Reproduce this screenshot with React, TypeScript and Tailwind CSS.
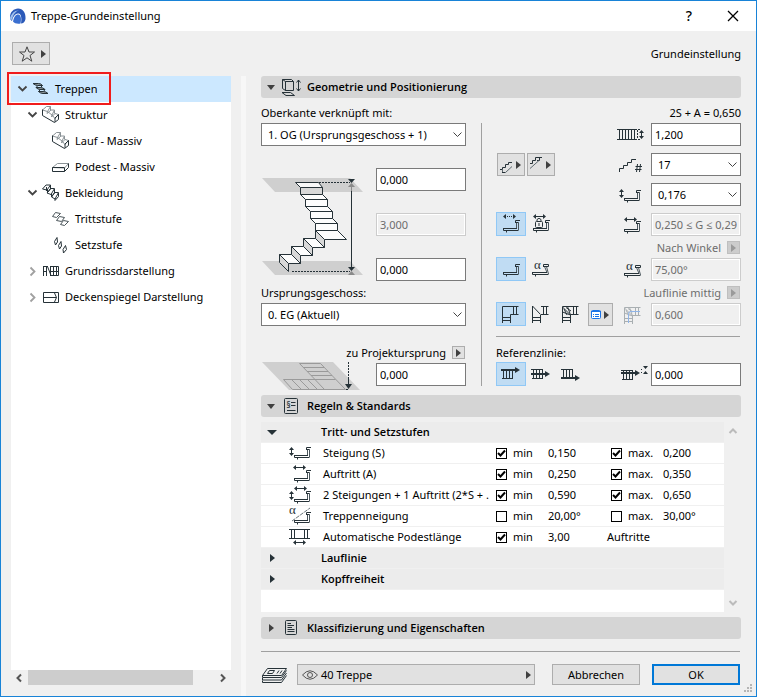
import type { ReactNode } from "react";

const INK = "#263238";

/* ---------- small shared glyphs ---------- */

function Svg({ w, h, children, className = "" }: { w: number; h: number; children: ReactNode; className?: string }) {
  return (
    <svg
      width={w}
      height={h}
      viewBox={`0 0 ${w} ${h}`}
      fill="none"
      stroke={INK}
      aria-hidden="true"
      className={`shrink-0 overflow-visible ${className}`}
    >
      {children}
    </svg>
  );
}

const TriRight = ({ color = "#404040" }: { color?: string }) => (
  <Svg w={5} h={8}>
    <path d="M0 0L5 4L0 8Z" fill={color} stroke="none" />
  </Svg>
);

const TriDown = ({ large = false }: { large?: boolean }) => (
  <Svg w={large ? 10 : 8} h={5}>
    <path d={large ? "M0 0H10L5 5Z" : "M0 0H8L4 5Z"} fill={large ? INK : "#404040"} stroke="none" />
  </Svg>
);

const ChevronDown = () => (
  <Svg w={9} h={6}>
    <path d="M.5 .5L4.5 4.5L8.5 .5" stroke="#444" strokeWidth="1.8" />
  </Svg>
);

const ChevronRight = () => (
  <Svg w={9} h={9}>
    <path d="M2.5 .5L6.5 4.5L2.5 8.5" stroke="#a0a0a0" strokeWidth="1.8" />
  </Svg>
);

/* Tread with its riser; x/y set the upper left corner. */
const Step = ({ x, y, slant = false }: { x: number; y: number; slant?: boolean }) => (
  <g transform={`translate(${x} ${y})`}>
    <path d={slant ? "M12.5 2.5L15 8.5M14.5 2.5L16.5 10" : "M13.5 2.5V8.5M15.5 2.5V10"} stroke="#4a565d" />
    <path d={slant ? "M.5 8.5H15M16.5 10.5H.5V8" : "M.5 8.5H14M15.5 10.5H.5V8"} />
    <path d={slant ? "M11.5 3V.5H16.5V2.5H12M3.5 10.5V12.5" : "M12.5 3V.5H17M12.5 2.5H15.5M3.5 10.5V12.5"} />
  </g>
);

const ArrowV = ({ x, y }: { x: number; y: number }) => (
  <g transform={`translate(${x} ${y})`}>
    <path d="M2.5 1V8" />
    <path d="M0 3L2.5 0L5 3ZM0 6L2.5 9L5 6Z" fill={INK} stroke="none" />
  </g>
);

const ArrowH = ({ x, y, dotted = false }: { x: number; y: number; dotted?: boolean }) => (
  <g transform={`translate(${x} ${y})`}>
    <path d="M2 2.5H11" strokeDasharray={dotted ? "1 1" : undefined} />
    <path d="M3 0L0 2.5L3 5ZM10 0L13 2.5L10 5Z" fill={INK} stroke="none" />
  </g>
);

const Alpha = ({ x, y }: { x: number; y: number }) => (
  <text x={x} y={y} fontSize="13" fontFamily="Liberation Serif, serif" fill={INK} stroke="none">
    α
  </text>
);

/* ---------- tree icons, 18 x 18 ---------- */

const icons: Record<string, ReactNode> = {
  stairs: (
    <Svg w={18} h={18}>
      <g fill="#8d979c">
        <path d="M1 3.5H6.5Q9 3.5 10.5 5.5H5.5Q3.5 5.5 1 3.5Z" />
        <path d="M4 7.5H8.5Q11 7.5 13 9.5H8Q6 9.5 4 7.5Z" />
        <path d="M6.5 11.5H11.5Q14 11.5 16 13.5H11Q8.5 13.5 6.5 11.5Z" />
      </g>
      <path d="M6 5.5L4 7.5M10.5 5.5L8.5 7.5M8.5 9.5L6.5 11.5M13 9.5L11.5 11.5" />
    </Svg>
  ),
  structure: (
    <Svg w={18} h={18}>
      <g stroke="#8a9296">
        <path d="M.5 4L4.5 .5H8.5L5.5 5.5ZM5.5 5.5L5 7.5L9 4H12.5L10 9ZM10 9L9.5 11L13 7.5L16.5 8.5L13 12.5ZM8.5 .5V4M12.5 4V7.5" />
      </g>
      <path d="M.5 3.5V9.5L12.5 16.5L16.5 13.5V8.5L13 12V16" />
    </Svg>
  ),
  landing: (
    <Svg w={18} h={18}>
      <path d="M.5 9.5L5.5 5.5H16.5L12.5 10Z" stroke="#8a9296" />
      <path d="M.5 9.5V13.5H12.5L16.5 9.5V5.5M12.5 10V13.5M.5 9.5H12.5" />
    </Svg>
  ),
  covering: (
    <Svg w={18} h={18}>
      <path d="M.5 5L4 1H8.5L5 6ZM5 9L8.5 4.5H12.5L9 10.5ZM9.5 13L12.5 8.5H16.5L13 15ZM4.5 3V7M8.5 1V5L5.5 8.5V5M12.5 5V9L9.5 13V10M16.5 9V12.5L13 16.5V14" />
    </Svg>
  ),
  tread: (
    <Svg w={18} h={18}>
      <path d="M.5 6.5L3.5 2.5L8.5 3.5L4.5 7.5ZM4.5 10.5L7.5 6.5L12.5 7.5L9.5 11.5ZM8.5 14.5L11.5 10.5L16.5 11.5L12.5 15.5Z" stroke="#4a555a" />
    </Svg>
  ),
  riser: (
    <Svg w={18} h={18}>
      <path d="M2.5 5.5L5 1.5L5.5 6L3.5 9ZM6.5 9.5L9 5.5L9.5 10L7.5 13ZM11 13.5L13.5 9.5L14.5 13.5L11.5 17Z" />
    </Svg>
  ),
  plan: (
    <Svg w={18} h={18}>
      <path d="M1.5 4V14M4.5 4V14M1 9.5H5M5.5 4.5L9 13.5M8.5 4V14M8 4.5H16.5V13.5H8M8 9.5H16.5M11.5 4V14M14.5 4V14M1 4.5H6" />
    </Svg>
  ),
  ceiling: (
    <Svg w={18} h={18}>
      <path d="M1.5 4.5H16.5V14.5H1.5ZM1 9.5H14.5L12.5 5M14.5 9.5L12.5 14" />
    </Svg>
  ),
};

/* ---------- tree ---------- */

type Node = { label: string; icon: string; pad: string; open?: boolean; selected?: boolean };

const tree: Node[] = [
  { label: "Treppen", icon: "stairs", pad: "pl-[7px]", open: true, selected: true },
  { label: "Struktur", icon: "structure", pad: "pl-[17px]", open: true },
  { label: "Lauf - Massiv", icon: "structure", pad: "pl-[27px]" },
  { label: "Podest - Massiv", icon: "landing", pad: "pl-[27px]" },
  { label: "Bekleidung", icon: "covering", pad: "pl-[17px]", open: true },
  { label: "Trittstufe", icon: "tread", pad: "pl-[27px]" },
  { label: "Setzstufe", icon: "riser", pad: "pl-[27px]" },
  { label: "Grundrissdarstellung", icon: "plan", pad: "pl-[17px]", open: false },
  { label: "Deckenspiegel Darstellung", icon: "ceiling", pad: "pl-[17px]", open: false },
];

function Sidebar() {
  return (
    <aside className="relative flex w-[220px] shrink-0 flex-col pb-[11px]">
      <ul className="flex-1 bg-white">
        {tree.map((n) => (
          <li key={n.label} className={`flex h-[26px] items-center gap-[5px] ${n.pad} ${n.selected ? "bg-[#cce8ff]" : ""}`}>
            {n.open === undefined ? (
              <span className="w-[9px]" />
            ) : (
              <button type="button" aria-label={n.label} aria-expanded={n.open} className="w-[9px]">
                {n.open ? <ChevronDown /> : <ChevronRight />}
              </button>
            )}
            {icons[n.icon]}
            <span className="whitespace-nowrap">{n.label}</span>
          </li>
        ))}
      </ul>
      <div className="pointer-events-none absolute -top-1 -left-1 h-[33px] w-[104px] border-2 border-[#f01c1c]" />
      <div className="flex h-[15px] items-center gap-[6px] px-[5px]">
        <button type="button" aria-label="Nach links">
          <Svg w={6} h={8}>
            <path d="M5 .5L1.5 4L5 7.5" stroke="#555" strokeWidth="2" />
          </Svg>
        </button>
        <div className="flex h-full flex-1">
          <div className="h-full w-[165px] bg-[#cdcdcd]" />
        </div>
        <button type="button" aria-label="Nach rechts">
          <Svg w={6} h={8}>
            <path d="M1 .5L4.5 4L1 7.5" stroke="#555" strokeWidth="2" />
          </Svg>
        </button>
      </div>
    </aside>
  );
}

/* ---------- controls ---------- */

function Field({ label, value, disabled = false }: { label: string; value: string; disabled?: boolean }) {
  return (
    <input
      aria-label={label}
      defaultValue={value}
      disabled={disabled}
      className={`h-[23px] w-[90px] border px-[3px] ${
        disabled ? "border-[#ccc] bg-[#f0f0f0] text-[#6d6d6d] shadow-[inset_0_0_0_1px_#fff]" : "border-[#7a7a7a] bg-white"
      }`}
    />
  );
}

function Picker({ label, value, wide = false }: { label: string; value: string; wide?: boolean }) {
  return (
    <div className={`relative ${wide ? "w-full" : "w-[90px]"}`}>
      <select
        aria-label={label}
        defaultValue={value}
        className="block h-[23px] w-full appearance-none border border-[#7a7a7a] bg-white pt-px pr-5 pl-[6px]"
      >
        <option>{value}</option>
      </select>
      <span className="pointer-events-none absolute inset-y-0 right-1 flex items-center">
        <Svg w={9} h={6}>
          <path d="M.5 .5L4.5 4.5L8.5 .5" stroke="#444" />
        </Svg>
      </span>
    </div>
  );
}

function MiniButton({ label, disabled = false }: { label: string; disabled?: boolean }) {
  return (
    <button
      type="button"
      aria-label={label}
      disabled={disabled}
      className={`mr-px flex size-[13px] items-center justify-center border ${
        disabled ? "border-[#bfbfbf] bg-[#ccc]" : "border-[#adadad] bg-[#e1e1e1]"
      }`}
    >
      <TriRight color={disabled ? "#9a9a9a" : "#404040"} />
    </button>
  );
}

function Toggle({ label, on = false, children }: { label: string; on?: boolean; children: ReactNode }) {
  return (
    <button
      type="button"
      aria-label={label}
      aria-pressed={on}
      className={`flex h-6 w-[30px] items-center justify-center border ${on ? "border-[#90c8f6] bg-[#c0dcf3]" : "border-transparent"}`}
    >
      <Svg w={24} h={20}>{children}</Svg>
    </button>
  );
}

function MenuButton({ label, children }: { label: string; children: ReactNode }) {
  return (
    <button
      type="button"
      aria-label={label}
      className="flex h-[23px] w-7 items-center justify-between border border-[#adadad] bg-[#e1e1e1] pr-[3px] pl-px"
    >
      {children}
      <TriRight />
    </button>
  );
}

/* One line of the right-hand block: switches, then a pictogram and its field. */
function Line({ left, icon, field }: { left?: ReactNode; icon: ReactNode; field: ReactNode }) {
  return (
    <div className="flex h-[23px] items-end">
      {left}
      <div className="ml-auto flex h-full items-center gap-[5px]">
        <Svg w={30} h={20}>{icon}</Svg>
        {field}
      </div>
    </div>
  );
}

function SectionHeader({ title, icon, open }: { title: string; icon: ReactNode; open: boolean }) {
  return (
    <h2 className="font-['Open_Sans','Noto_Sans',sans-serif] font-semibold">
      <button
        type="button"
        aria-expanded={open}
        className="flex h-[22px] w-full items-center gap-[6px] rounded-[3px] bg-[#d5d5d5] pl-[6px]"
      >
        <span className="flex w-2 justify-center">{open ? <TriDown /> : <TriRight />}</span>
        {icon}
        <span>{title}</span>
      </button>
    </h2>
  );
}

/* ---------- drawings ---------- */

const StairDrawing = () => (
  <svg width="102" height="98" viewBox="261 178 102 98" fill="none" stroke={INK} aria-hidden="true" className="mt-8 shrink-0">
    <path d="M262 178H350L363 192H275ZM262 261H350L363 275H275Z" fill="#cfcfcf" stroke="none" />
    <g fill="#fff" fillOpacity=".85">
      <path d="M295.5 182.5H318.5L322.5 187.5H300.5Z" />
      <path d="M300.5 194.5H322.5L327.5 199.5H305.5Z" />
      <path d="M305.5 199.5H327.5V206.5H305.5Z" />
      <path d="M305.5 206.5H327.5L332.5 211.5H310.5Z" />
      <path d="M310.5 211.5H332.5V218.5H310.5Z" />
      <path d="M310.5 218.5H332.5L337.5 223.5H315.5Z" />
      <path d="M315.5 223.5H337.5V230.5H315.5Z" />
      <path d="M315.5 230.5H337.5L346.5 239.5H324.5Z" />
      <path d="M303.5 238.5H315.5L324.5 247.5H312.5Z" />
      <path d="M291.5 246.5H303.5L312.5 255.5H300.5Z" />
      <path d="M279.5 254.5H291.5L300.5 263.5H288.5Z" />
    </g>
    <g fill="#d8d8d8">
      <path d="M300.5 187.5H322.5V194.5H300.5Z" />
      <path d="M315.5 230.5L324.5 239.5V247.5L315.5 238.5Z" />
      <path d="M303.5 238.5L312.5 247.5V255.5L303.5 246.5Z" />
      <path d="M291.5 246.5L300.5 255.5V263.5L291.5 254.5Z" />
      <path d="M279.5 254.5L288.5 263.5V271.5L279.5 262.5Z" />
    </g>
    <path d="M319 182.5H350M292 271.5H350" strokeDasharray="2 1" />
    <path d="M351.5 191V270" />
    <path d="M351.5 185V191" stroke="#8a8a8a" />
    <path d="M348 179H355L351.5 183ZM348 267H355L351.5 271Z" fill={INK} stroke="none" />
    <path d="M348 187H355L351.5 183ZM348 275H355L351.5 271Z" fill="#8a8a8a" stroke="none" />
  </svg>
);

const OriginDrawing = () => (
  <svg width="102" height="29" viewBox="261 363 102 29" fill="none" aria-hidden="true" className="shrink-0 overflow-visible">
    <path d="M262 362H333L360 390H289Z" fill="#cfcfcf" />
    <path
      d="M299.5 363.5H320.5L345.5 389.5H292.5L283.5 379.5H335.5M299.5 363.5L315 379.5M303 367.5H324M307 371.5H328M311 375.5H332M291.5 379.5L301 389M299.5 379.5L309 389M307.5 379.5L317 389M315 379.5L324 389"
      stroke="#9a9a9a"
    />
    <path d="M348.5 362V378" stroke={INK} strokeDasharray="2 1" />
    <path d="M348.5 378V386M346 389.5H348" stroke={INK} />
    <path d="M345 384H352L348.5 389Z" fill={INK} />
  </svg>
);

const Winder = ({ x, y, kind, color = INK }: { x: number; y: number; kind: "plain" | "diagonal" | "fan"; color?: string }) => (
  <g transform={`translate(${x} ${y})`} stroke={color}>
    <path d="M9 .5H16.5M9 8.5H16.5M11.5 0V9M14.5 0V9M.5 9V17M8.5 9V17M0 11.5H9M0 14.5H9" />
    {kind === "plain" && <path d="M.5 11V.5H10M8.5 12V8.5H12" />}
    {kind === "diagonal" && <path d="M.5 10V0L8.5 8.5" />}
    {kind === "fan" && <path d="M.5 10V.5H10M8.5 9L.5 1M8.5 9L5.5 .5M8.5 9L.5 6M2 3L5 9M4 1.5L9 5" />}
  </g>
);

/* A flight seen from above, with the reference line at one edge or in the middle. */
const Flight = ({ x, y, line }: { x: number; y: number; line: number }) => (
  <g transform={`translate(${x} ${y})`}>
    <path d="M2.5 1V11M5.5 1V11M8.5 1V11M11.5 1V11" />
    {line > 2 && <path d="M0 1.5H12" />}
    {line < 10 && <path d="M1 10.5H12" />}
    <path d={`M0 ${line}H15`} strokeWidth="2" />
    <path d={`M14 ${line - 3}L19 ${line}L14 ${line + 3}Z`} fill={INK} stroke="none" />
  </g>
);

/* ---------- geometry section ---------- */

function Geometry() {
  return (
    <div className="mb-[9px] flex">
      <div className="w-[205px] shrink-0">
        <div className="flex h-[25px] items-center pt-1">Oberkante verknüpft mit:</div>
        <Picker label="Oberkante verknüpft mit" value="1. OG (Ursprungsgeschoss + 1)" wide />
        <div className="flex justify-between">
          <StairDrawing />
          <div className="flex flex-col gap-[22px] pt-[22px]">
            <Field label="Oberer Versatz" value="0,000" />
            <Field label="Treppenhöhe" value="3,000" disabled />
            <Field label="Unterer Versatz" value="0,000" />
          </div>
        </div>
        <div className="flex h-[22px] items-center pt-[2px]">Ursprungsgeschoss:</div>
        <Picker label="Ursprungsgeschoss" value="0. EG (Aktuell)" wide />
        <div className="mt-[18px] mb-[2px] flex h-[17px] items-center justify-end gap-[6px]">
          <span>zu Projektursprung</span>
          <MiniButton label="zu Projektursprung" />
        </div>
        <div className="flex justify-between">
          <div className="h-[23px]">
            <OriginDrawing />
          </div>
          <Field label="Höhe zu Projektursprung" value="0,000" />
        </div>
      </div>

      <div className="mt-[25px] mr-[14px] ml-[15px] w-px bg-[#a0a0a0]" />

      <div className="min-w-0 flex-1">
        <div className="flex h-[25px] items-center justify-end pt-1">2S + A = 0,650</div>
        <div className="flex flex-col gap-[7px]">
          <Line
            icon={
              <>
                <path d="M1 4.5H19M1 14.5H19M3.5 4V15M6.5 4V15M9.5 4V15M12.5 4V15M15.5 4V15M18.5 4V15" />
                <path d="M19 4.5H24M19 14.5H24M21.5 5V14" strokeDasharray="2 1" />
                <ArrowV x={23} y={5} />
              </>
            }
            field={<Field label="Treppenbreite" value="1,200" />}
          />
          <Line
            left={
              <div className="flex gap-0.5 pl-px">
                <MenuButton label="Treppenanfang">
                  <Svg w={14} h={20}>
                    <path d="M1 14.5H3.5V12.5H6.5V9.5H9.5V7.5H13M3 17.5H6.5" />
                    <path d="M3.5 14V17M6.5 17.5L13 11.5" stroke="#5c686e" />
                  </Svg>
                </MenuButton>
                <MenuButton label="Treppenende">
                  <Svg w={14} h={20}>
                    <path d="M1 8.5H3.5V5.5H6.5V2.5H13M10.5 2.5V5.5H8" />
                    <path d="M1 13.5L10 5.5" stroke="#5c686e" />
                  </Svg>
                </MenuButton>
              </div>
            }
            icon={
              <>
                <path d="M3.5 17V13.5H7.5V10.5H11.5V7.5H15.5V4.5H20" />
                <path d="M21.5 9L20.5 17M24.5 9L23.5 17M19.5 11.5H26M19 14.5H25.5" />
              </>
            }
            field={<Picker label="Anzahl der Steigungen" value="17" />}
          />
          <Line
            icon={
              <>
                <ArrowV x={3} y={4} />
                <Step x={8} y={5} />
              </>
            }
            field={<Picker label="Steigung" value="0,176" />}
          />
          <Line
            left={
              <div className="flex">
                <Toggle label="Auftritt frei" on>
                  <ArrowH x={4} y={0} dotted />
                  <Step x={4} y={6} />
                </Toggle>
                <Toggle label="Auftritt gesperrt">
                  <ArrowH x={4} y={0} />
                  <Step x={4} y={6} />
                  <rect x="6.5" y="7.5" width="7" height="6" rx="1" fill="#f0f0f0" />
                  <path d="M8 7V5.5Q10 3 12 5.5V7M10 9V12" />
                </Toggle>
              </div>
            }
            icon={
              <>
                <ArrowH x={8} y={2} />
                <Step x={8} y={6} />
              </>
            }
            field={<Field label="Auftritt" value="0,250 ≤ G ≤ 0,29" disabled />}
          />
        </div>
        <div className="flex h-[22px] items-center justify-end gap-[6px] pt-px text-[#6d6d6d]">
          <span>Nach Winkel</span>
          <MiniButton label="Nach Winkel" disabled />
        </div>
        <Line
          left={
            <div className="flex">
              <Toggle label="Gerade Setzstufe" on>
                <Step x={4} y={5} />
              </Toggle>
              <Toggle label="Geneigte Setzstufe">
                <Alpha x={5} y={10} />
                <Step x={3} y={5} slant />
              </Toggle>
            </div>
          }
          icon={
            <>
              <Alpha x={10} y={10} />
              <Step x={8} y={5} slant />
            </>
          }
          field={<Field label="Winkel" value="75,00°" disabled />}
        />
        <div className="flex h-[22px] items-center justify-end gap-[6px] pt-px text-[#6d6d6d]">
          <span>Lauflinie mittig</span>
          <MiniButton label="Lauflinie mittig" disabled />
        </div>
        <Line
          left={
            <div className="flex items-end">
              <Toggle label="Podest" on>
                <Winder x={3} y={2} kind="plain" />
              </Toggle>
              <Toggle label="Geteiltes Podest">
                <Winder x={3} y={2} kind="diagonal" />
              </Toggle>
              <Toggle label="Gewendelt">
                <Winder x={3} y={2} kind="fan" />
              </Toggle>
              <button
                type="button"
                aria-label="Wendelung"
                className="ml-[2px] flex h-[23px] w-[25px] items-center justify-between border border-[#adadad] bg-[#e1e1e1] pr-[3px] pl-[2px]"
              >
                <Svg w={10} h={9}>
                  <rect x=".5" y=".5" width="9" height="8" rx="1" stroke="#1a73e8" fill="#fff" />
                  <path d="M0 1.5H10" stroke="#1a73e8" />
                  <path d="M2 4.5H3M2 6.5H3M4 4.5H8M4 6.5H8" stroke="#1a73e8" />
                </Svg>
                <TriRight />
              </button>
            </div>
          }
          icon={
            <>
              <Winder x={8} y={2} kind="fan" color="#a9afb2" />
              <path d="M12.5 18V8.5Q12.5 6.5 15 6.5H24" stroke="#8fb4e8" />
            </>
          }
          field={<Field label="Lauflinienabstand" value="0,600" disabled />}
        />
        <hr className="mt-[10px] mr-px border-[#a0a0a0]" />
        <div className="flex h-[26px] items-center pt-[6px]">Referenzlinie:</div>
        <Line
          left={
            <div className="flex">
              <Toggle label="Referenzlinie links" on>
                <Flight x={2} y={4} line={2} />
              </Toggle>
              <Toggle label="Referenzlinie mittig">
                <Flight x={2} y={4} line={6} />
              </Toggle>
              <Toggle label="Referenzlinie rechts">
                <Flight x={2} y={4} line={10} />
              </Toggle>
            </div>
          }
          icon={
            <>
              <Flight x={5} y={4} line={4} />
              <path d="M25 4.5H27M25 7.5H27" strokeDasharray="1 1" />
              <path d="M27 1H32L29.5 4ZM27 9H32L29.5 6Z" fill={INK} stroke="none" />
            </>
          }
          field={<Field label="Versatz der Referenzlinie" value="0,000" />}
        />
      </div>
    </div>
  );
}

/* ---------- rules table ---------- */

type Rule = { name: string; icon: ReactNode; on: boolean; min: string; max?: string; unit?: string };

const rules: Rule[] = [
  {
    name: "Steigung (S)",
    on: true,
    min: "0,150",
    max: "0,200",
    icon: (
      <>
        <ArrowV x={0} y={3} />
        <Step x={5} y={3} />
      </>
    ),
  },
  {
    name: "Auftritt (A)",
    on: true,
    min: "0,250",
    max: "0,350",
    icon: (
      <>
        <ArrowH x={4} y={0} />
        <Step x={5} y={5} />
      </>
    ),
  },
  {
    name: "2 Steigungen + 1 Auftritt (2*S + .",
    on: true,
    min: "0,590",
    max: "0,650",
    icon: (
      <>
        <ArrowH x={5} y={0} />
        <ArrowV x={0} y={5} />
        <Step x={5} y={5} />
      </>
    ),
  },
  {
    name: "Treppenneigung",
    on: false,
    min: "20,00°",
    max: "30,00°",
    icon: (
      <>
        <Alpha x={0} y={7} />
        <path d="M3 14L21 1" strokeDasharray="4 1" stroke="#67737a" />
        <Step x={5} y={5} />
      </>
    ),
  },
  {
    name: "Automatische Podestlänge",
    on: true,
    min: "3,00",
    unit: "Auftritte",
    icon: (
      <>
        <path d="M0 1.5H21M0 10.5H21M2.5 1V11M5.5 1V11M15.5 1V11M18.5 1V11" />
        <ArrowH x={4} y={12} />
      </>
    ),
  },
];

function Check({ text, on }: { text: string; on: boolean }) {
  return (
    <label className="flex items-center gap-[6px]">
      <span className="grid">
        <input
          type="checkbox"
          defaultChecked={on}
          className="peer col-start-1 row-start-1 size-[11px] appearance-none border border-black bg-white"
        />
        <svg
          viewBox="0 0 11 11"
          fill="none"
          stroke="#000"
          strokeWidth="2"
          className="pointer-events-none invisible col-start-1 row-start-1 size-[11px] peer-checked:visible"
        >
          <path d="M2 5L4.5 7.5L9 2.5" />
        </svg>
      </span>
      {text}
    </label>
  );
}

function GroupRow({ title, open }: { title: string; open: boolean }) {
  return (
    <tr className="h-[21px] bg-[#ececec]">
      <th colSpan={6} className="border-b border-[#f0f0f0] p-0 text-left font-['Open_Sans','Noto_Sans',sans-serif] font-semibold">
        <button type="button" aria-expanded={open} className="flex items-center pl-[6px]">
          <span className="flex w-[10px] justify-center">{open ? <TriDown large /> : <TriRight color={INK} />}</span>
          <span className="pl-11">{title}</span>
        </button>
      </th>
    </tr>
  );
}

const cell = "border-b border-[#f0f0f0] p-0";

function Rules() {
  return (
    <div className="mt-[5px] mb-[5px] flex min-h-[190px] flex-1">
      <div className="min-w-0 flex-1 bg-white">
        <table className="w-full table-fixed border-separate border-spacing-0 whitespace-nowrap">
          <colgroup>
            <col className="w-[60px]" />
            <col />
            <col className="w-[52px]" />
            <col className="w-[59px]" />
            <col className="w-[56px]" />
            <col className="w-[61px]" />
          </colgroup>
          <tbody>
            <GroupRow title="Tritt- und Setzstufen" open />
            {rules.map((r) => (
              <tr key={r.name} className="h-[21px]">
                <td className={`${cell} pl-7`}>
                  <Svg w={22} h={18}>{r.icon}</Svg>
                </td>
                <td className={`${cell} pl-0.5`}>{r.name}</td>
                <td className={cell}>
                  <Check text="min" on={r.on} />
                </td>
                <td className={cell}>{r.min}</td>
                {r.max ? (
                  <>
                    <td className={`${cell} pl-1`}>
                      <Check text="max." on={r.on} />
                    </td>
                    <td className={cell}>{r.max}</td>
                  </>
                ) : (
                  <td colSpan={2} className={cell}>
                    {r.unit}
                  </td>
                )}
              </tr>
            ))}
            <GroupRow title="Lauflinie" open={false} />
            <GroupRow title="Kopffreiheit" open={false} />
          </tbody>
        </table>
      </div>
      <div className="flex w-[17px] flex-col items-center justify-between py-[6px]">
        <button type="button" aria-label="Nach oben">
          <Svg w={8} h={6}>
            <path d="M.5 5L4 1.5L7.5 5" stroke="#bbb" strokeWidth="2" />
          </Svg>
        </button>
        <button type="button" aria-label="Nach unten">
          <Svg w={8} h={6}>
            <path d="M.5 1L4 4.5L7.5 1" stroke="#bbb" strokeWidth="2" />
          </Svg>
        </button>
      </div>
    </div>
  );
}

/* ---------- window ---------- */

export default function App() {
  return (
    <div className="flex min-h-screen flex-col border border-[#1883d7] bg-[#f0f0f0] font-['Noto_Sans','Open_Sans',sans-serif] text-[11px] leading-4 text-black">
      <header className="flex h-[30px] shrink-0 items-center bg-white pr-[17px] pl-[9px]">
        <svg width="16" height="16" viewBox="0 0 16 16" aria-hidden="true">
          <path d="M0 9C0 4 4 .5 8 .5C13 .5 16 5 15.5 11C15 14 13 15.5 11 15.5C12 10 11 5 8 5.5C4.5 6 3 9 2 13C.5 12 0 10.5 0 9Z" fill="#2b59b8" />
          <path d="M0 10C1.5 5 5 2 9 2.5C6 3 3 6 2 12C1 11.5 .3 11 0 10Z" fill="#9fc0ee" />
          <path d="M3 13.5C4 8.5 6 6 8.5 6.5C11 7 11.5 11 10.5 15.5C7.5 16 4.5 15.5 3 13.5Z" fill="#3a6fd0" />
        </svg>
        <h1 className="pl-[5px]">Treppe-Grundeinstellung</h1>
        <div className="ml-auto flex items-center gap-[35px]">
          <button type="button" aria-label="Hilfe" className="text-[14px] font-medium">
            ?
          </button>
          <button type="button" aria-label="Schließen">
            <Svg w={12} h={12}>
              <path d="M1 1L11 11M11 1L1 11" stroke="#000" strokeWidth="1.3" />
            </Svg>
          </button>
        </div>
      </header>

      <div className="flex h-[45px] shrink-0 items-center justify-between pr-[15px] pl-[11px]">
        <button
          type="button"
          aria-label="Favoriten"
          className="flex h-[23px] w-[38px] items-center justify-between border border-[#adadad] bg-[#e1e1e1] pr-[3px] pl-[6px]"
        >
          <Svg w={16} h={16}>
            <path d="M8 .8L10 6H15.5L11 9.5L12.8 15.2L8 11.8L3.2 15.2L5 9.5L.5 6H6Z" stroke="#444" />
          </Svg>
          <TriRight />
        </button>
        <span>Grundeinstellung</span>
      </div>

      <div className="flex flex-1 pl-[10px]">
        <Sidebar />
        <div className="ml-[10px] w-[5px] shrink-0 bg-[#f7f7f7]" />
        <main className="flex min-w-0 flex-1 flex-col pr-[15px] pb-[11px] pl-[15px]">
          <SectionHeader
            title="Geometrie und Positionierung"
            open
            icon={
              <Svg w={20} h={18}>
                <path d="M1.5 1.5L4.5 3.5V12.5L1.5 10.5ZM1.5 1.5H10.5L12.5 3.5M4.5 3.5H12.5V12.5H4.5ZM1 14.5H9.5L13.5 17.5H5Z" />
                <path d="M17.5 2V13M15.5 4.5L17.5 2L19.5 4.5M15.5 10.5L17.5 13L19.5 10.5" />
              </Svg>
            }
          />
          <Geometry />
          <SectionHeader
            title="Regeln & Standards"
            open
            icon={
              <Svg w={20} h={16}>
                <rect x="3.5" y=".5" width="13" height="15" rx="1" />
                <path d="M10 4.5H14.5M10 7.5H14.5M6 12.5H14.5" />
                <text x="5.5" y="9.5" fontSize="8" fontFamily="Open Sans, sans-serif" fill={INK} stroke="none">
                  §
                </text>
              </Svg>
            }
          />
          <Rules />
          <SectionHeader
            title="Klassifizierung und Eigenschaften"
            open={false}
            icon={
              <Svg w={20} h={16}>
                <rect x="4.5" y=".5" width="11" height="14" rx="1" />
                <path d="M6.5 3.5H10M6.5 5.5H13M6.5 7.5H11M6.5 9.5H13.5M6.5 11.5H13.5" />
              </Svg>
            }
          />
          <hr className="mt-3 mr-px border-[#a0a0a0]" />
          <div className="mt-3 flex items-center pr-px">
            <Svg w={26} h={16}>
              <path d="M6.5 1.5H25.5L20.5 8.5H1.5Z" fill="#f0f0f0" />
              <path d="M1.5 8.5V10.5H20.5L25.5 3.5M1.5 11V13H20.5L25.5 6M1.5 13.5V15.5H20.5L25.5 8.5" />
              <path d="M8.5 3.5H13.5L11.5 6.5H6.5ZM16 6.5L18 3.5M19 6.5L21 3.5" />
            </Svg>
            <button
              type="button"
              className="ml-[10px] flex h-[21px] min-w-0 flex-1 items-center gap-[3px] border border-[#adadad] bg-[#e1e1e1] pt-px pr-[3px] pl-1"
            >
              <Svg w={16} h={10}>
                <path d="M.5 5Q8-3.5 15.5 5Q8 13.5 .5 5Z" stroke="#555" />
                <circle cx="8" cy="5" r="2.5" stroke="#555" />
              </Svg>
              <span>40 Treppe</span>
              <span className="ml-auto">
                <TriRight />
              </span>
            </button>
            <button type="button" className="ml-[17px] h-[21px] w-[88px] border border-[#adadad] bg-[#e1e1e1]">
              Abbrechen
            </button>
            <button type="button" className="ml-3 h-[21px] w-[88px] border-2 border-[#0078d7] bg-[#e1e1e1]">
              OK
            </button>
          </div>
        </main>
      </div>
      <svg width="9" height="9" viewBox="0 0 9 9" fill="#b5b5b5" aria-hidden="true" className="fixed right-1 bottom-1">
        <path d="M6 0H8V2H6ZM3 3H5V5H3ZM6 3H8V5H6ZM0 6H2V8H0ZM3 6H5V8H3ZM6 6H8V8H6Z" />
      </svg>
    </div>
  );
}
